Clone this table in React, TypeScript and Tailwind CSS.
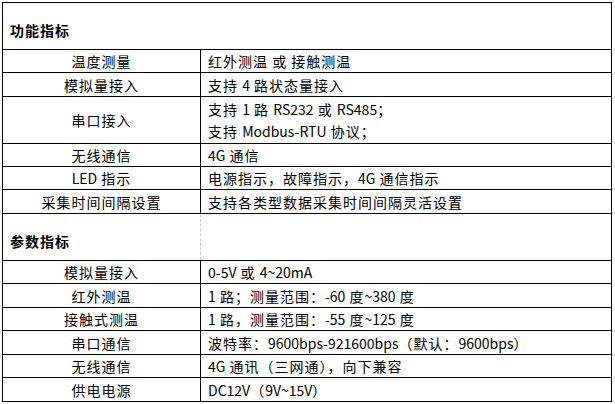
const FONT = "font-['Noto_Sans_CJK_SC','Noto_Sans',sans-serif]"

type Row = { label: string; value: string[]; h: string }

const FUNC_ROWS: Row[] = [
  { label: '温度测量', value: ['红外测温 或 接触测温'], h: 'h-[23px]' },
  { label: '模拟量接入', value: ['支持 4 路状态量接入'], h: 'h-[24px]' },
  { label: '串口接入', value: ['支持 1 路 RS232 或 RS485；', '支持 Modbus-RTU 协议；'], h: 'h-[47px]' },
  { label: '无线通信', value: ['4G 通信'], h: 'h-[23px]' },
  { label: 'LED 指示', value: ['电源指示，故障指示，4G 通信指示'], h: 'h-[23px]' },
  { label: '采集时间间隔设置', value: ['支持各类型数据采集时间间隔灵活设置'], h: 'h-[24px]' },
]

const PARAM_ROWS: Row[] = [
  { label: '模拟量接入', value: ['0-5V 或 4~20mA'], h: 'h-[23px]' },
  { label: '红外测温', value: ['1 路；测量范围：-60 度~380 度'], h: 'h-[24px]' },
  { label: '接触式测温', value: ['1 路，测量范围：-55 度~125 度'], h: 'h-[23px]' },
  { label: '串口通信', value: ['波特率：9600bps-921600bps（默认：9600bps）'], h: 'h-[24px]' },
  { label: '无线通信', value: ['4G 通讯（三网通），向下兼容'], h: 'h-[23px]' },
  { label: '供电电源', value: ['DC12V（9V~15V）'], h: 'h-[24px]' },
]

// latin runs sit tighter than the CJK glyphs in the source document
function Mixed({ text }: { text: string }) {
  const parts = text.split(/([A-Za-z0-9~\-.]+)/)
  return (
    <span className="whitespace-pre">
      {parts.map((p, i) =>
        /[A-Za-z0-9]/.test(p) ? (
          <span key={i} className="tracking-[0px]">
            {p}
          </span>
        ) : (
          <span key={i}>{p}</span>
        ),
      )}
    </span>
  )
}

function SpecRow({ row }: { row: Row }) {
  return (
    <div className={`flex border-b border-black ${row.h}`}>
      <div className="flex w-[198px] shrink-0 items-center justify-center border-r border-black">
        <Mixed text={row.label} />
      </div>
      <div className="flex flex-col justify-center gap-[2px] pl-[7px]">
        {row.value.map((v) => (
          <Mixed key={v} text={v} />
        ))}
      </div>
    </div>
  )
}

function SectionHeader({ title, divider }: { title: string; divider?: boolean }) {
  return (
    <div className="flex h-[47px] border-b border-black">
      <div
        className={`flex w-[198px] shrink-0 items-center pl-[7px] pt-[7px] font-bold ${
          divider ? 'border-r border-dashed border-[#c8c8c8]' : ''
        }`}
      >
        {title}
      </div>
    </div>
  )
}

export default function App() {
  return (
    <div className={`h-[404px] w-[615px] bg-white pt-[2px] pl-[2px] ${FONT} text-[14px] leading-[20px] tracking-[1px] text-black`}>
      <div className="box-border w-[610px] border-x border-t border-black [&_*]:box-border">
        <SectionHeader title="功能指标" />
        {FUNC_ROWS.map((r) => (
          <SpecRow key={r.label} row={r} />
        ))}
        <SectionHeader title="参数指标" divider />
        {PARAM_ROWS.map((r) => (
          <SpecRow key={r.label} row={r} />
        ))}
      </div>
    </div>
  )
}
